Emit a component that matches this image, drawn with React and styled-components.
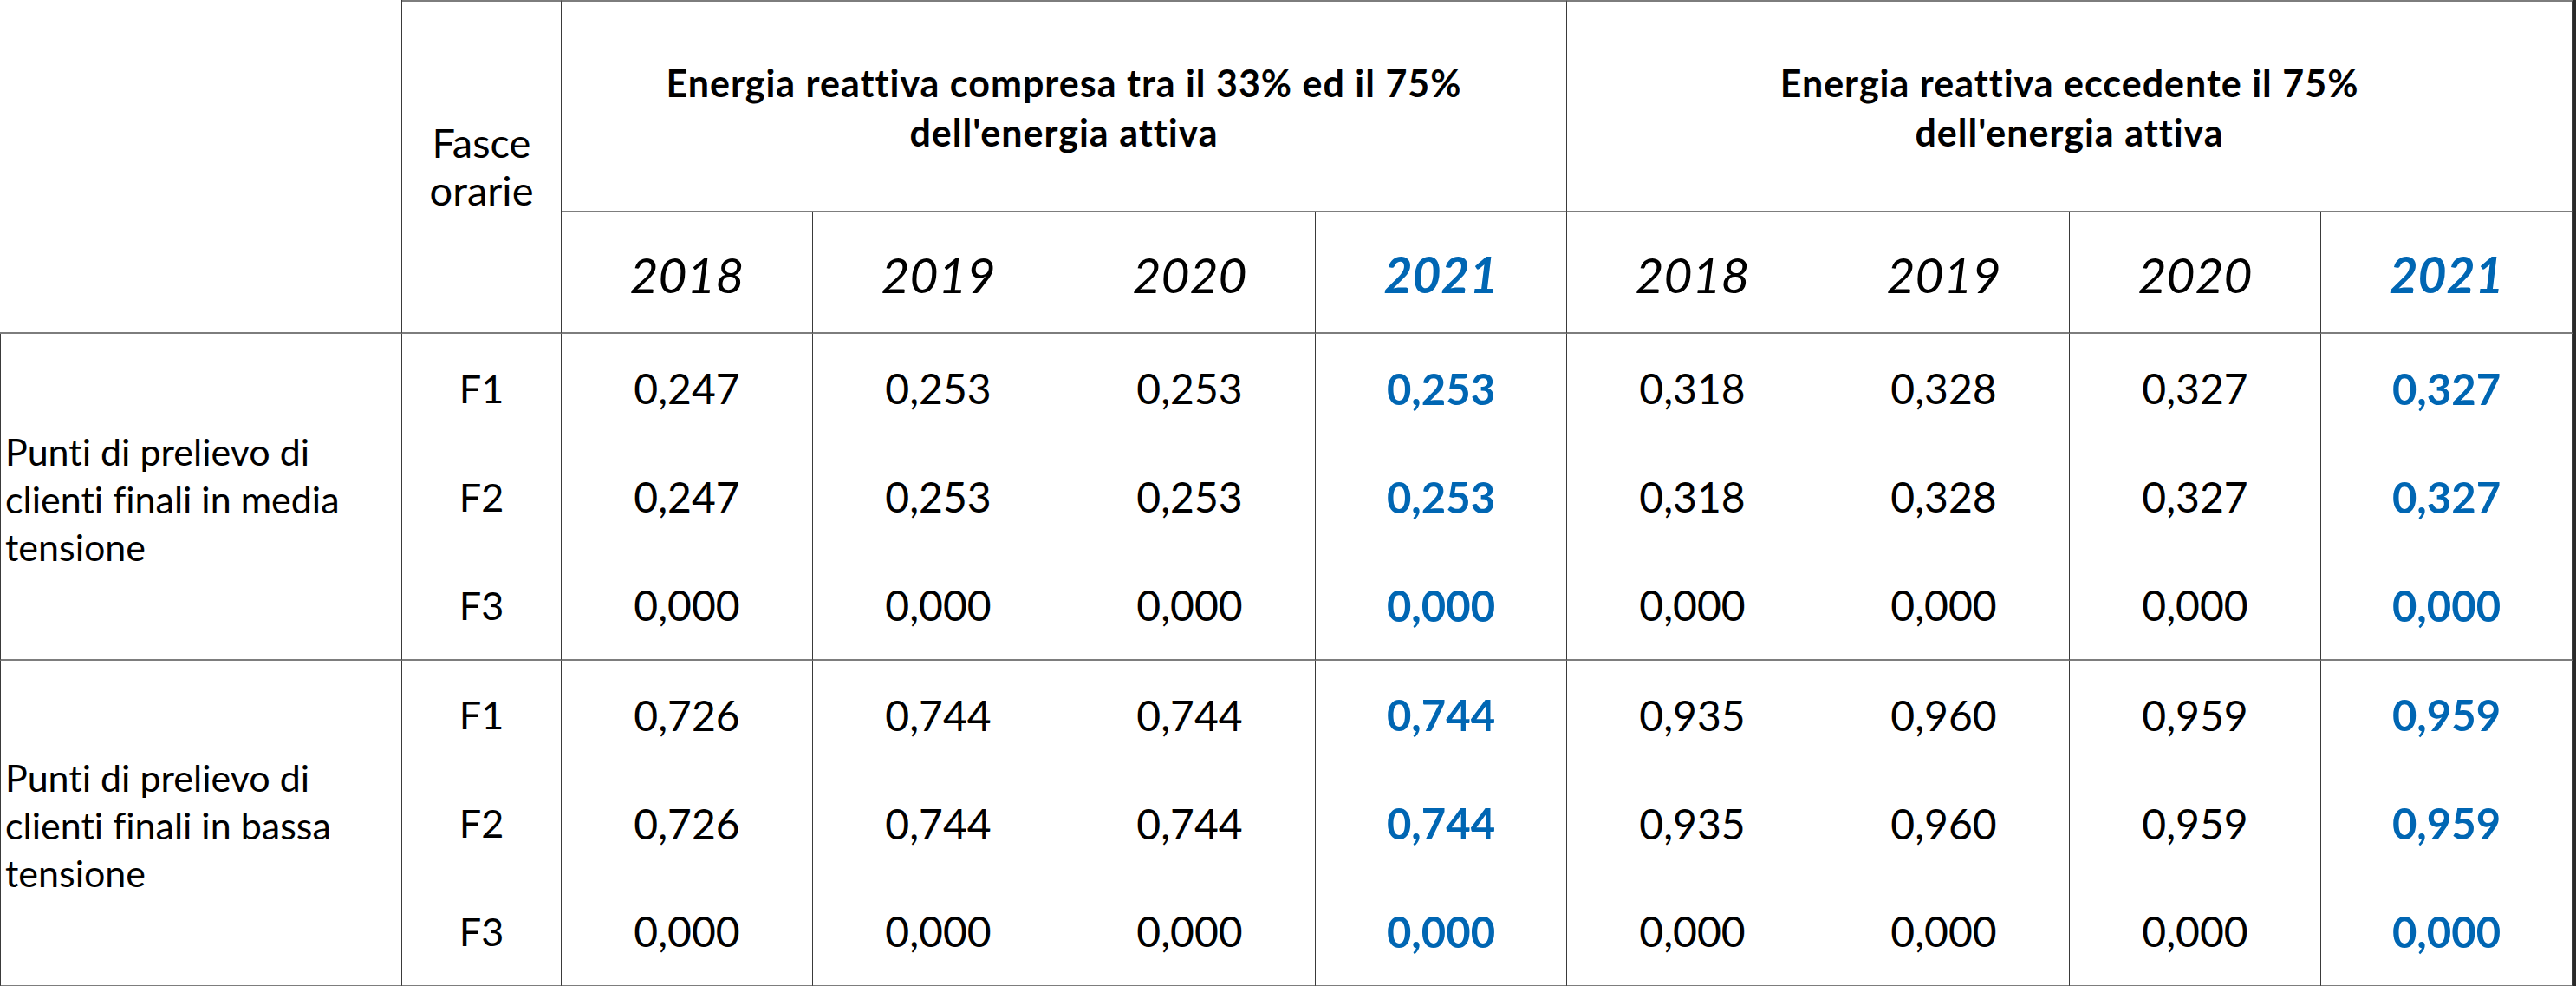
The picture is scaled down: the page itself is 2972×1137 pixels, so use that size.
import styled, { createGlobalStyle } from 'styled-components';

const GlobalStyle = createGlobalStyle`
  html, body {
    margin: 0;
    padding: 0;
    background: #ffffff;
  }
  body {
    font-family: Lato, 'Noto Sans', 'Liberation Sans', sans-serif;
    font-variant-ligatures: none;
    font-feature-settings: 'liga' 0, 'clig' 0;
    color: #000000;
  }
`;

const LINE_V = '1px solid #3a3a3a';
const LINE_H = '2px solid #7d7d7d';
const BLUE = '#0066b3';

const years = ['2018', '2019', '2020', '2021'];

const groups = [
  {
    label: 'Punti di prelievo di clienti finali in media tensione',
    low: [
      ['0,247', '0,253', '0,253', '0,253'],
      ['0,247', '0,253', '0,253', '0,253'],
      ['0,000', '0,000', '0,000', '0,000'],
    ],
    high: [
      ['0,318', '0,328', '0,327', '0,327'],
      ['0,318', '0,328', '0,327', '0,327'],
      ['0,000', '0,000', '0,000', '0,000'],
    ],
  },
  {
    label: 'Punti di prelievo di clienti finali in bassa tensione',
    low: [
      ['0,726', '0,744', '0,744', '0,744'],
      ['0,726', '0,744', '0,744', '0,744'],
      ['0,000', '0,000', '0,000', '0,000'],
    ],
    high: [
      ['0,935', '0,960', '0,959', '0,959'],
      ['0,935', '0,960', '0,959', '0,959'],
      ['0,000', '0,000', '0,000', '0,000'],
    ],
  },
];

const bands = ['F1', 'F2', 'F3'];

const App = () => {
  return (
    <>
      <GlobalStyle />
      <Table>
        <Corner />
        <FasceHead>
          Fasce
          <br />
          orarie
        </FasceHead>
        <GroupHead>
          Energia reattiva compresa tra il 33% ed il 75%
          <br />
          dell'energia attiva
        </GroupHead>
        <GroupHead>
          Energia reattiva eccedente il 75%
          <br />
          dell'energia attiva
        </GroupHead>

        {[0, 1].map((g) =>
          years.map((y, i) => (
            <YearHead key={`${g}-${y}`} $current={i === 3}>
              {y}
            </YearHead>
          ))
        )}

        {groups.map((group) => (
          <Body key={group.label}>
            <Label>{group.label}</Label>
            <Stack>
              {bands.map((b) => (
                <Band key={b}>{b}</Band>
              ))}
            </Stack>
            {[0, 1, 2, 3].map((col) => (
              <Stack key={`low-${col}`}>
                {group.low.map((row, r) => (
                  <Value key={r} $current={col === 3}>
                    {row[col]}
                  </Value>
                ))}
              </Stack>
            ))}
            {[0, 1, 2, 3].map((col) => (
              <Stack key={`high-${col}`}>
                {group.high.map((row, r) => (
                  <Value key={r} $current={col === 3}>
                    {row[col]}
                  </Value>
                ))}
              </Stack>
            ))}
          </Body>
        ))}
      </Table>
    </>
  );
};

export default App;

const Table = styled.div`
  display: grid;
  grid-template-columns: 464px 184px repeat(8, 290px);
  grid-template-rows: 245px 140px 377px 376px;
  width: 2972px;
  box-sizing: border-box;
  border-right: 3px solid #2a2a2a;
  border-bottom: 2px solid #2a2a2a;
`;

const Cell = styled.div`
  box-sizing: border-box;
  border-right: ${LINE_V};
  border-bottom: ${LINE_H};
  display: flex;
  align-items: center;
  justify-content: center;
  text-align: center;
`;

const Corner = styled(Cell)`
  grid-row: 1 / 3;
  grid-column: 1;
`;

const FasceHead = styled(Cell)`
  grid-row: 1 / 3;
  grid-column: 2;
  border-top: ${LINE_H};
  font-size: 47px;
  line-height: 55px;
  padding-bottom: 2px;
`;

const GroupHead = styled(Cell)`
  grid-column: span 4;
  border-top: ${LINE_H};
  font-weight: 700;
  font-size: 43px;
  letter-spacing: 1px;
  line-height: 57px;
  padding-top: 3px;
`;

const YearHead = styled(Cell)`
  font-style: italic;
  font-size: 57px;
  font-weight: ${(p) => (p.$current ? 700 : 400)};
  color: ${(p) => (p.$current ? BLUE : '#000000')};
  padding-top: 4px;
`;

const Body = styled.div`
  display: contents;
`;

const Label = styled(Cell)`
  border-left: ${LINE_V};
  justify-content: flex-start;
  text-align: left;
  padding: 5px 16px 0 5px;
  font-size: 43px;
  line-height: 55px;
`;

const Stack = styled(Cell)`
  flex-direction: column;
  align-items: stretch;
`;

const Band = styled.div`
  flex: 1;
  display: flex;
  align-items: center;
  justify-content: center;
  font-size: 45px;
`;

const Value = styled.div`
  flex: 1;
  display: flex;
  align-items: center;
  justify-content: center;
  font-size: ${(p) => (p.$current ? '49px' : '48px')};
  font-weight: ${(p) => (p.$current ? 700 : 400)};
  color: ${(p) => (p.$current ? BLUE : '#000000')};
`;
